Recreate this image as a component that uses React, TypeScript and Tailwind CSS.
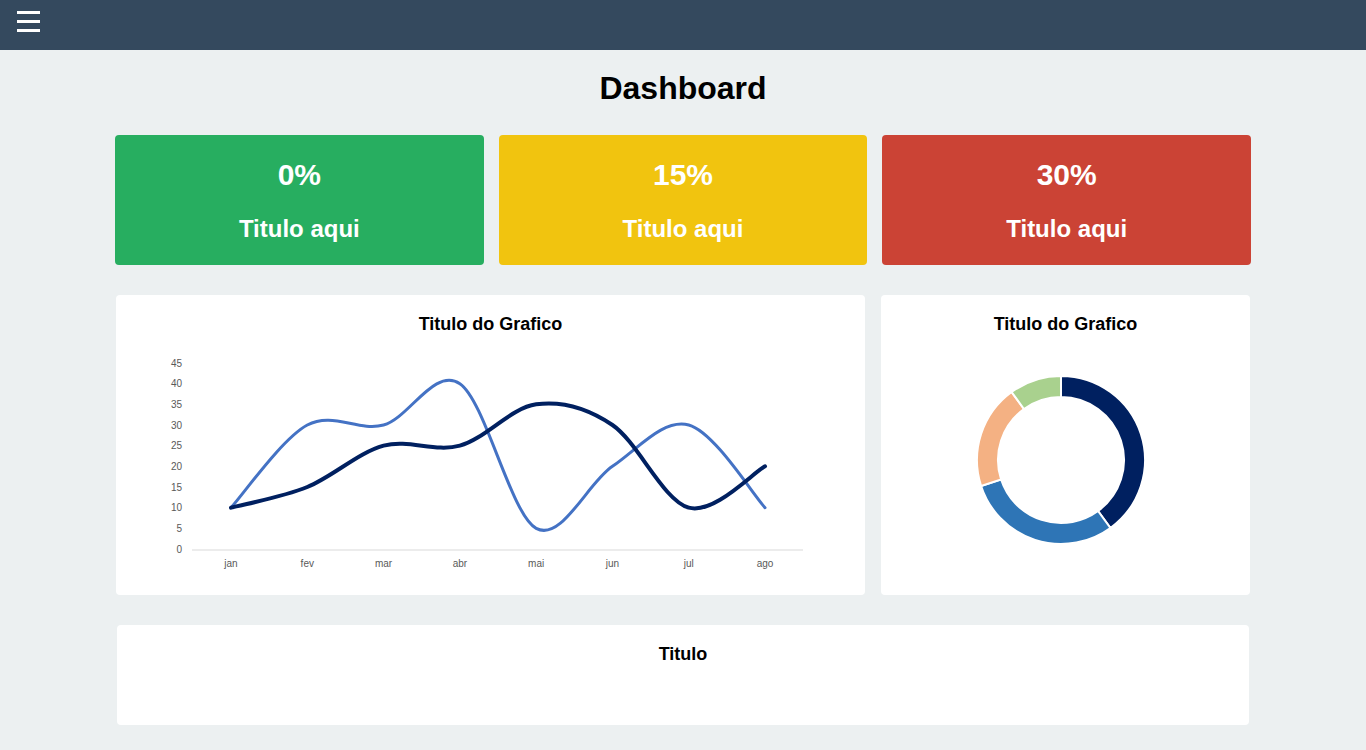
const months = ["jan", "fev", "mar", "abr", "mai", "jun", "jul", "ago"];
const serieA = [10, 30, 30, 40, 5, 20, 30, 10];
const serieB = [10, 15, 25, 25, 35, 30, 10, 20];

const xAt = (i: number) => 115 + i * 76.29;
const yAt = (v: number) => 209 - v * 4.133;

// catmull-rom -> bezier, roughly how excel smooths lines
const smoothPath = (vals: number[]) => {
  const pts = vals.map((v, i) => [xAt(i), yAt(v)]);
  let d = `M${pts[0][0]},${pts[0][1]}`;
  for (let i = 0; i < pts.length - 1; i++) {
    const p0 = pts[i - 1] || pts[i];
    const p1 = pts[i];
    const p2 = pts[i + 1];
    const p3 = pts[i + 2] || p2;
    const c1x = p1[0] + (p2[0] - p0[0]) / 6;
    const c1y = p1[1] + (p2[1] - p0[1]) / 6;
    const c2x = p2[0] - (p3[0] - p1[0]) / 6;
    const c2y = p2[1] - (p3[1] - p1[1]) / 6;
    d += ` C${c1x},${c1y} ${c2x},${c2y} ${p2[0]},${p2[1]}`;
  }
  return d;
};

const LineChart = () => (
  <svg width="749" height="250" className="mt-[5px] block">
    {[0, 5, 10, 15, 20, 25, 30, 35, 40, 45].map((v) => (
      <text
        key={v}
        x="66"
        y={yAt(v) + 3.5}
        textAnchor="end"
        fontSize="10"
        fill="#595959"
        fontFamily="'Liberation Sans', sans-serif"
      >
        {v}
      </text>
    ))}
    <line x1="76" y1="210" x2="687" y2="210" stroke="#d9d9d9" strokeWidth="1" />
    {months.map((m, i) => (
      <text
        key={m}
        x={xAt(i)}
        y="227"
        textAnchor="middle"
        fontSize="10"
        fill="#595959"
        fontFamily="'Liberation Sans', sans-serif"
      >
        {m}
      </text>
    ))}
    <path d={smoothPath(serieA)} fill="none" stroke="#4472c4" strokeWidth="3" strokeLinecap="round" />
    <path d={smoothPath(serieB)} fill="none" stroke="#002060" strokeWidth="4" strokeLinecap="round" />
  </svg>
);

const slices = [
  { pct: 40, color: "#002060" },
  { pct: 30, color: "#2e75b6" },
  { pct: 20, color: "#f4b183" },
  { pct: 10, color: "#a9d18e" },
];

const Donut = () => {
  const cx = 180;
  const cy = 120;
  const ro = 84;
  const ri = 63;
  let start = 0;
  const pt = (r: number, a: number) => {
    const rad = (a - 90) * (Math.PI / 180);
    return `${cx + r * Math.cos(rad)},${cy + r * Math.sin(rad)}`;
  };
  return (
    <svg width="369" height="240" className="mt-[5px] block">
      {slices.map((s) => {
        const a0 = start;
        const a1 = start + s.pct * 3.6;
        start = a1;
        const big = a1 - a0 > 180 ? 1 : 0;
        const d = `M${pt(ro, a0)} A${ro},${ro} 0 ${big} 1 ${pt(ro, a1)} L${pt(ri, a1)} A${ri},${ri} 0 ${big} 0 ${pt(ri, a0)} Z`;
        return <path key={s.color} d={d} fill={s.color} stroke="#ffffff" strokeWidth="2" />;
      })}
    </svg>
  );
};

const StatCard = ({ value, color }: { value: string; color: string }) => (
  <div className={`flex flex-1 flex-col items-center gap-[22px] rounded p-[22px] text-white ${color}`}>
    <span className="text-[30px] font-bold leading-[36px]">{value}</span>
    <span className="text-[24px] font-bold leading-[28px]">Titulo aqui</span>
  </div>
);

export default function App() {
  return (
    <div
      className="min-h-[750px] bg-[#ecf0f1] text-black"
      style={{ fontFamily: "'Liberation Sans', Arial, sans-serif" }}
    >
      <header className="flex h-[50px] items-start bg-[#34495e] pl-[17px] pt-[11px]">
        <button className="flex flex-col gap-[6px]">
          <span className="block h-[3px] w-[23px] bg-white" />
          <span className="block h-[3px] w-[23px] bg-white" />
          <span className="block h-[3px] w-[23px] bg-white" />
        </button>
      </header>

      <main className="mx-auto w-[1136px]">
        <h1 className="pt-[20px] text-center text-[32px] font-bold leading-[37px]">Dashboard</h1>

        <div className="mt-[28px] flex gap-[15px]">
          <StatCard value="0%" color="bg-[#27ae60]" />
          <StatCard value="15%" color="bg-[#f1c40f]" />
          <StatCard value="30%" color="bg-[#cb4335]" />
        </div>

        <div className="mt-[30px] flex gap-[16px] px-[1px]">
          <div className="h-[300px] w-[749px] rounded bg-white pt-[18px]">
            <h2 className="text-center text-[18px] font-bold leading-[22px]">Titulo do Grafico</h2>
            <LineChart />
          </div>
          <div className="h-[300px] w-[369px] rounded bg-white pt-[18px]">
            <h2 className="text-center text-[18px] font-bold leading-[22px]">Titulo do Grafico</h2>
            <Donut />
          </div>
        </div>

        <div className="mt-[30px] px-[2px] pb-[25px]">
          <div className="h-[100px] rounded bg-white pt-[18px]">
            <h2 className="text-center text-[18px] font-bold leading-[22px]">Titulo</h2>
          </div>
        </div>
      </main>
    </div>
  );
}
